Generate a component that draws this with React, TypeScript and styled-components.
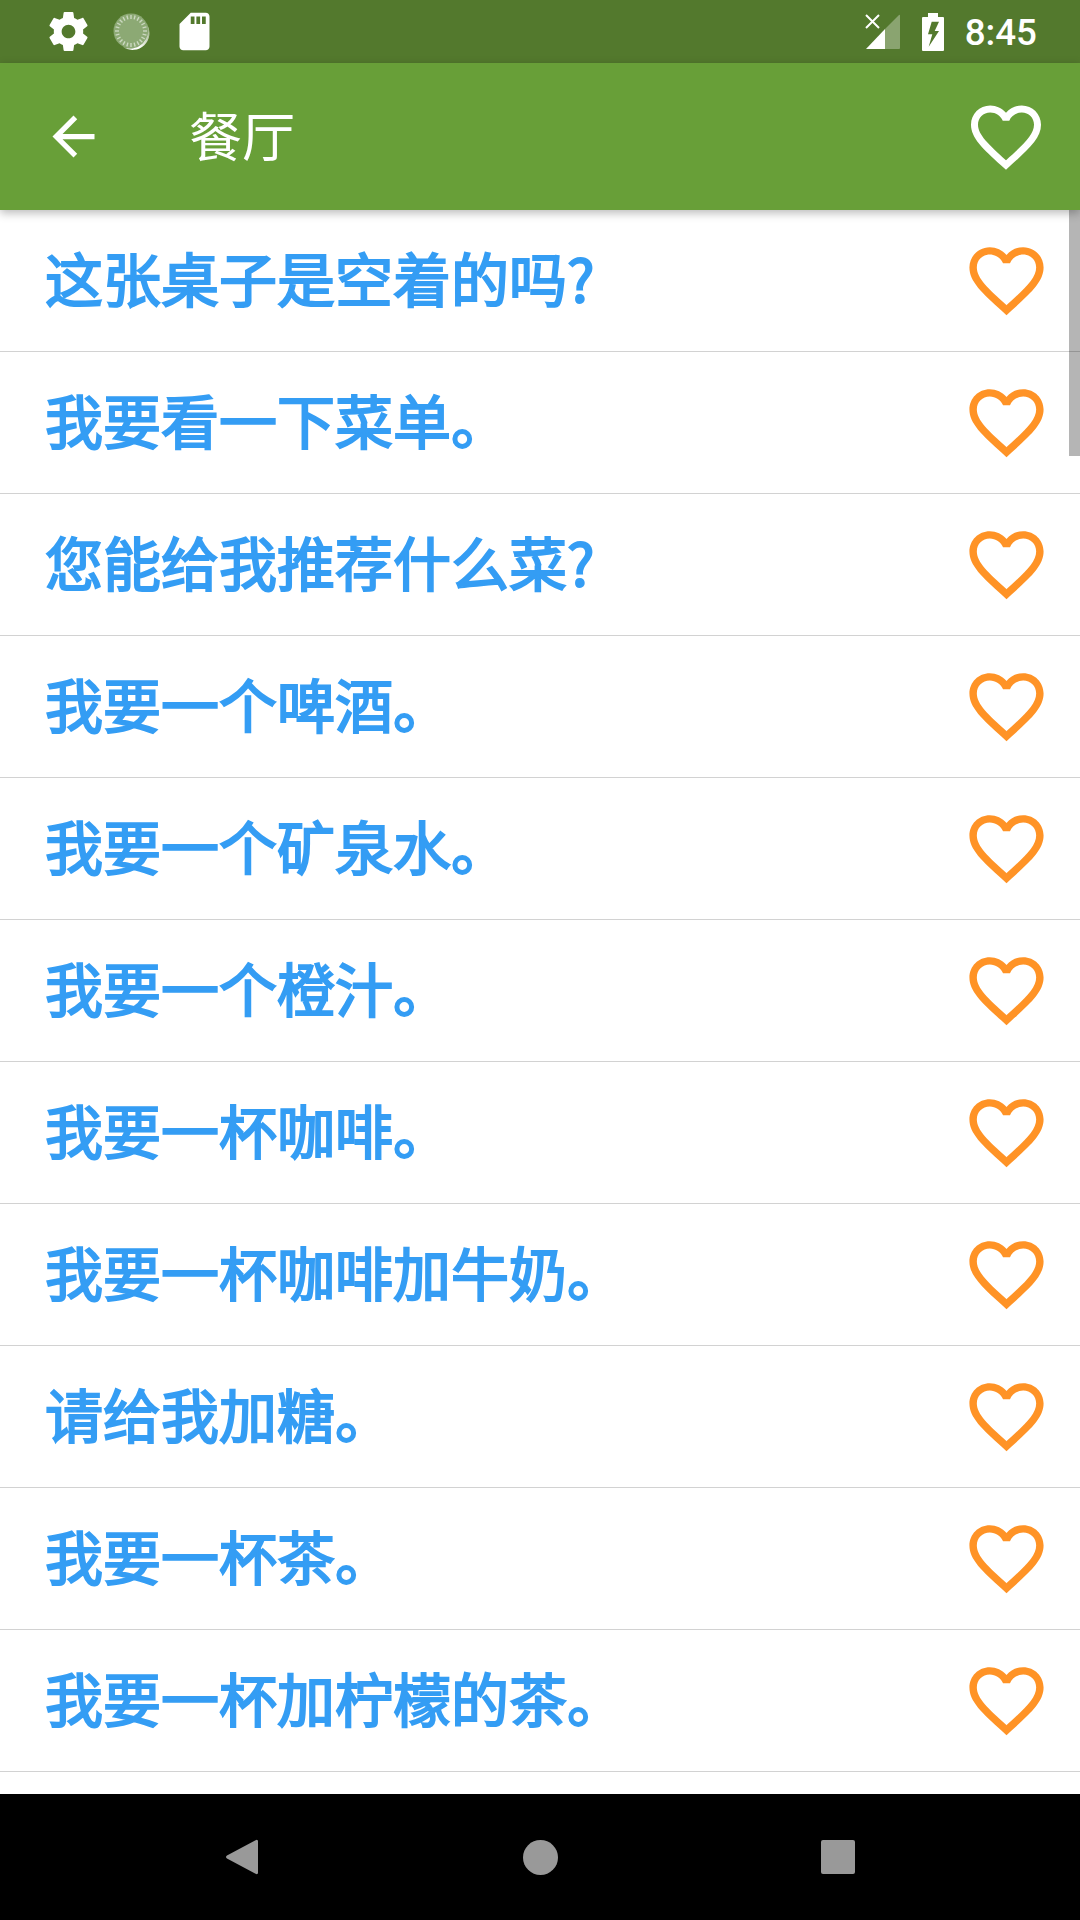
import React from "react";
import styled, { createGlobalStyle } from "styled-components";

const phrases = [
  "这张桌子是空着的吗?",
  "我要看一下菜单。",
  "您能给我推荐什么菜?",
  "我要一个啤酒。",
  "我要一个矿泉水。",
  "我要一个橙汁。",
  "我要一杯咖啡。",
  "我要一杯咖啡加牛奶。",
  "请给我加糖。",
  "我要一杯茶。",
  "我要一杯加柠檬的茶。",
];

const HEART =
  "M16.5 3c-1.74 0-3.41.81-4.5 2.09C10.91 3.81 9.24 3 7.5 3 4.42 3 2 5.42 2 8.5c0 3.78 3.4 6.86 8.55 11.54L12 21.35l1.45-1.32C18.6 15.36 22 12.28 22 8.5 22 5.42 19.58 3 16.5 3zm-4.4 15.55l-.1.1-.1-.1C7.14 14.24 4 11.39 4 8.5 4 6.5 5.5 5 7.5 5c1.54 0 3.04.99 3.57 2.36h1.87C13.46 5.99 14.96 5 16.5 5c2 0 3.5 1.5 3.5 3.5 0 2.89-3.14 5.74-7.9 10.05z";

const GlobalStyle = createGlobalStyle`
  html, body {
    margin: 0;
    padding: 0;
    background: #fff;
  }
`;

const Screen = styled.div`
  position: relative;
  display: flex;
  flex-direction: column;
  width: 1080px;
  height: 1920px;
  overflow: hidden;
  font-family: "Noto Sans CJK SC", "Noto Sans", sans-serif;
`;

const StatusBar = styled.div`
  display: flex;
  align-items: center;
  justify-content: space-between;
  flex: none;
  height: 63px;
  padding: 0 43px 0 37px;
  background: #53792d;
`;

const StatusGroup = styled.div`
  display: flex;
  align-items: center;
`;

const StatusSlot = styled.div`
  display: flex;
  align-items: center;
  justify-content: center;
  width: 63px;
  height: 63px;
`;

const SignalSlot = styled.div`
  display: flex;
  margin-right: 2px;
`;

const Clock = styled.span`
  margin-top: 2px;
  font-family: Roboto, sans-serif;
  font-size: 36.75px;
  font-weight: 500;
  line-height: 61px;
  color: #fff;
`;

const Toolbar = styled.header`
  position: relative;
  z-index: 2;
  display: flex;
  align-items: center;
  flex: none;
  height: 147px;
  padding: 0 32px 0 42px;
  background: #689f38;
  box-shadow: 0 3px 9px rgba(0, 0, 0, 0.28);
`;

const Title = styled.h1`
  flex: 1;
  margin: 0 0 4px 84px;
  font-size: 53px;
  font-weight: 400;
  line-height: 1;
  color: #fff;
`;

const List = styled.main`
  position: relative;
  flex: 1;
  overflow: hidden;
  background: #fff;
`;

const Row = styled.div`
  display: flex;
  align-items: center;
  justify-content: space-between;
  box-sizing: border-box;
  height: 142px;
  padding: 0 29px 0 45px;
  border-bottom: 1px solid #d2d2d2;
`;

const Phrase = styled.span`
  margin-bottom: 7px;
  font-size: 58px;
  font-weight: 400;
  line-height: 1;
  color: #349df4;
  -webkit-text-stroke: 2px #349df4;
`;

const Scrollbar = styled.div`
  position: absolute;
  top: 0;
  right: 0;
  width: 11px;
  height: 246px;
  background: rgba(0, 0, 0, 0.29);
`;

const NavBar = styled.nav`
  display: grid;
  grid-template-columns: repeat(3, 63px);
  justify-content: center;
  column-gap: 235px;
  align-items: center;
  flex: none;
  height: 126px;
  background: #000;
`;

const NavSlot = styled.div`
  display: flex;
  align-items: center;
  justify-content: center;
`;

const HeartIcon = ({ size, color }: { size: number; color: string }) => (
  <svg width={size} height={size} viewBox="0 0 24 24" fill={color}>
    <path d={HEART} />
  </svg>
);

const BackIcon = () => (
  <svg width="63" height="63" viewBox="0 0 24 24" fill="#fff">
    <path d="M20 11H7.83l5.59-5.59L12 4l-8 8 8 8 1.41-1.41L7.83 13H20v-2z" />
  </svg>
);

const GearIcon = () => (
  <svg width="47" height="47" viewBox="0 0 24 24" fill="#fff">
    <path d="M19.43 12.98c.04-.32.07-.64.07-.98s-.03-.66-.07-.98l2.11-1.65c.19-.15.24-.42.12-.64l-2-3.46c-.12-.22-.39-.3-.61-.22l-2.49 1c-.52-.4-1.08-.73-1.69-.98l-.38-2.65C14.46 2.18 14.25 2 14 2h-4c-.25 0-.46.18-.49.42l-.38 2.65c-.61.25-1.17.59-1.69.98l-2.49-1c-.23-.09-.49 0-.61.22l-2 3.46c-.13.22-.07.49.12.64l2.11 1.65c-.04.32-.07.65-.07.98s.03.66.07.98l-2.11 1.65c-.19.15-.24.42-.12.64l2 3.46c.12.22.39.3.61.22l2.49-1c.52.4 1.08.73 1.69.98l.38 2.65c.03.24.24.42.49.42h4c.25 0 .46-.18.49-.42l.38-2.65c.61-.25 1.17-.59 1.69-.98l2.49 1c.23.09.49 0 .61-.22l2-3.46c.12-.22.07-.49-.12-.64l-2.11-1.65zM12 15.5c-1.93 0-3.5-1.57-3.5-3.5s1.57-3.5 3.5-3.5 3.5 1.57 3.5 3.5-1.57 3.5-3.5 3.5z" />
  </svg>
);

const SyncDialIcon = () => (
  <svg width="38" height="38" viewBox="0 0 38 38">
    <defs>
      <linearGradient id="crescent" x1="1" y1="0" x2="0" y2="1">
        <stop offset="0" stopColor="#fff" stopOpacity="0.3" />
        <stop offset="0.65" stopColor="#fff" stopOpacity="1" />
      </linearGradient>
    </defs>
    <circle cx="18" cy="18" r="17.5" fill="#8ca974" />
    <path d="M34 11A17 17 0 0 1 10 34A18 18 0 0 0 34 11z" fill="url(#crescent)" />
    {Array.from({ length: 24 }, (_, i) => (
      <line
        key={i}
        x1="18"
        y1="2"
        x2="18"
        y2="6"
        stroke="#fff"
        strokeOpacity="0.55"
        strokeWidth="1.4"
        transform={`rotate(${i * 15} 18 18)`}
      />
    ))}
  </svg>
);

const SdCardIcon = () => (
  <svg width="45" height="45" viewBox="0 0 24 24" fill="#fff">
    <path d="M18 2h-8L4.02 8 4 20c0 1.1.9 2 2 2h12c1.1 0 2-.9 2-2V4c0-1.1-.9-2-2-2zm-6 6h-2V4h2v4zm3 0h-2V4h2v4zm3 0h-2V4h2v4z" />
  </svg>
);

const SignalIcon = () => (
  <svg width="35" height="35" viewBox="0 0 35 35">
    <path d="M20 15L34 1q1-1 1 1v32q0 1-1 1H20z" fill="#fff" opacity="0.32" />
    <path d="M20 15v20H1q-1.500-.5-1.500L20 15z" fill="#fff" />
    <path d="M1 1l13 13M14 1L1 14" stroke="#fff" strokeWidth="2" fill="none" />
  </svg>
);

const BatteryIcon = () => (
  <svg width="22" height="38" viewBox="0 0 22 38">
    <path
      fillRule="evenodd"
      d="M6 0h10v4h5q1 0 1 1v32q0 1-1 1H1q-1 0-1-1V5q0-1 1-1h5zM17 8.700H9.700L6 21.300h4.300L6.700 33.700 17 18h-4.300z"
      fill="#fff"
    />
  </svg>
);

const NavBack = () => (
  <svg width="32" height="36" viewBox="0 0 33 37" fill="#999">
    <path d="M30 1.500q3-2 3 1v32q0 3-3 1L1 20q-2-1.500 0-3z" />
  </svg>
);

const NavHome = () => (
  <svg width="35" height="35" viewBox="0 0 35 35" fill="#999">
    <circle cx="17.5" cy="17.500" r="17.5" />
  </svg>
);

const NavRecent = () => (
  <svg width="34" height="34" viewBox="0 0 34 34" fill="#999">
    <rect width="34" height="34" rx="2" />
  </svg>
);

export default function App() {
  return (
    <Screen>
      <GlobalStyle />
      <StatusBar>
        <StatusGroup>
          <StatusSlot>
            <GearIcon />
          </StatusSlot>
          <StatusSlot>
            <SyncDialIcon />
          </StatusSlot>
          <StatusSlot>
            <SdCardIcon />
          </StatusSlot>
        </StatusGroup>
        <StatusGroup>
          <SignalSlot>
            <SignalIcon />
          </SignalSlot>
          <StatusSlot>
            <BatteryIcon />
          </StatusSlot>
          <Clock>8:45</Clock>
        </StatusGroup>
      </StatusBar>
      <Toolbar>
        <BackIcon />
        <Title>餐厅</Title>
        <HeartIcon size={84} color="#fff" />
      </Toolbar>
      <List>
        {phrases.map(text => (
          <Row key={text}>
            <Phrase>{text}</Phrase>
            <HeartIcon size={89} color="#ff9326" />
          </Row>
        ))}
        <Scrollbar />
      </List>
      <NavBar>
        <NavSlot>
          <NavBack />
        </NavSlot>
        <NavSlot>
          <NavHome />
        </NavSlot>
        <NavSlot>
          <NavRecent />
        </NavSlot>
      </NavBar>
    </Screen>
  );
}
